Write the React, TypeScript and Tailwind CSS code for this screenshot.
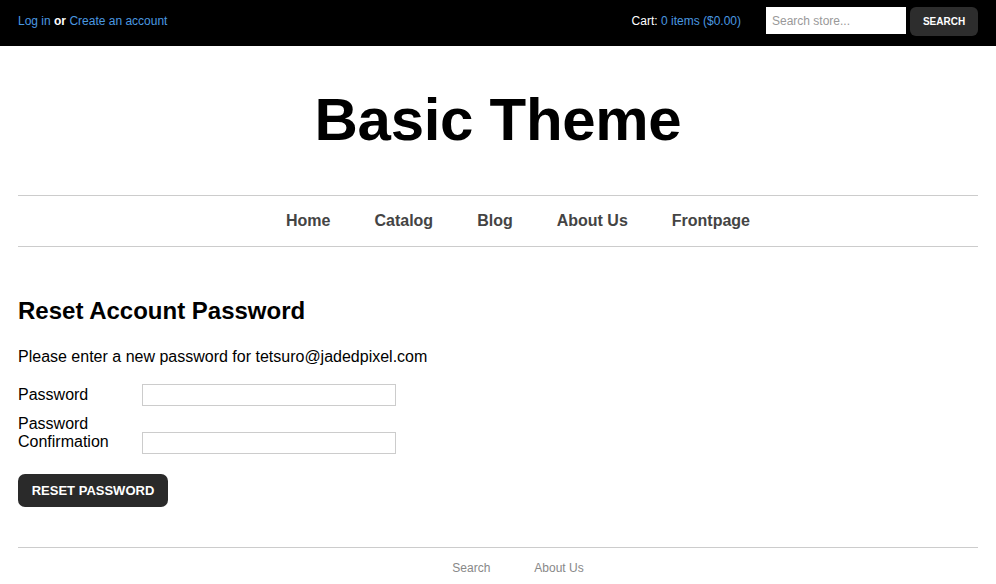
import React from 'react';

const navItems = ['Home', 'Catalog', 'Blog', 'About Us', 'Frontpage'];

export default function App() {
  return (
    <div className="min-h-[584px] bg-white text-black" style={{ fontFamily: '"Liberation Sans", Arial, sans-serif' }}>
      {/* Top bar */}
      <div className="flex h-[46px] items-start bg-black px-[18px] pt-[7px] text-[12px]">
        <div className="flex-1 pt-[8px] leading-none">
          <a href="#" className="text-[#4a98e0]">Log in</a>
          <span className="font-bold text-white"> or </span>
          <a href="#" className="text-[#4a98e0]">Create an account</a>
        </div>
        <div className="pt-[8px] leading-none">
          <span className="text-white">Cart: </span>
          <a href="#" className="text-[#4a98e0]">0 items ($0.00)</a>
        </div>
        <input
          type="text"
          placeholder="Search store..."
          className="ml-[25px] h-[27px] w-[140px] bg-white px-[6px] text-[12px] text-black outline-none placeholder:text-[#999]"
        />
        <button className="ml-[4px] h-[29px] w-[68px] rounded-[6px] bg-[#2d2d2d] text-[10px] font-bold text-white">
          SEARCH
        </button>
      </div>

      <div className="px-[18px]">
        {/* Title */}
        <div className="pt-[44px] pb-[45px] text-center">
          <h1 className="text-[60px] font-bold leading-none tracking-[-0.3px]">Basic Theme</h1>
        </div>

        {/* Nav */}
        <nav className="flex h-[52px] items-center justify-center gap-[44px] border-y border-[#cccccc] pl-[40px]">
          {navItems.map((item) => (
            <a key={item} href="#" className="text-[16px] font-bold text-[#444]">
              {item}
            </a>
          ))}
        </nav>

        {/* Content */}
        <div className="pt-[50px]">
          <h2 className="text-[24px] font-bold leading-[28px]">Reset Account Password</h2>
          <p className="mt-[22px] text-[16px] leading-[20px]">
            Please enter a new password for tetsuro@jadedpixel.com
          </p>

          <div className="mt-[17px] flex items-center">
            <label className="w-[124px] text-[16px] leading-[18px]">Password</label>
            <input type="password" className="h-[22px] w-[254px] border border-[#cccccc] outline-none" />
          </div>
          <div className="mt-[9px] flex items-start">
            <label className="w-[124px] text-[16px] leading-[18px]">
              Password
              <br />
              Confirmation
            </label>
            <input type="password" className="mt-[17px] h-[22px] w-[254px] border border-[#cccccc] outline-none" />
          </div>

          <button className="mt-[20px] h-[33px] w-[150px] rounded-[7px] bg-[#2a2a2a] text-[13px] font-bold text-white">
            RESET PASSWORD
          </button>
        </div>

        {/* Footer */}
        <footer className="mt-[40px] flex justify-center gap-[44px] border-t border-[#cccccc] pl-[40px] pt-[11px] text-[12px] text-[#888]">
          <a href="#">Search</a>
          <a href="#">About Us</a>
        </footer>
      </div>
    </div>
  );
}
